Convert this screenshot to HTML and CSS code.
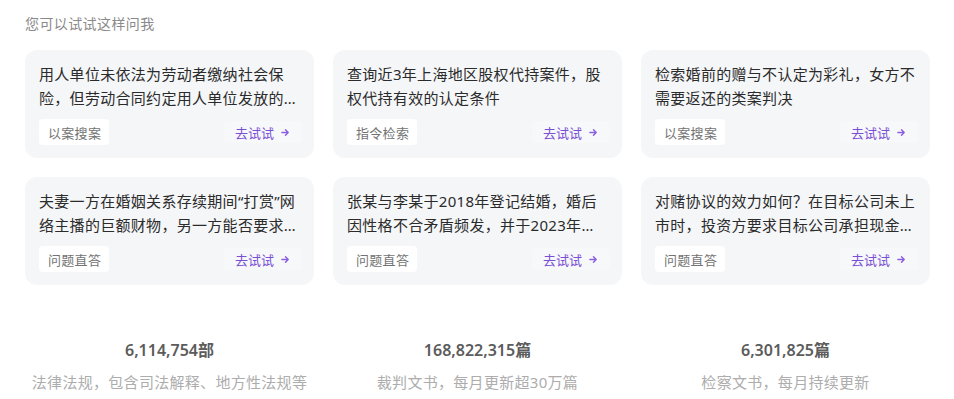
FILE: index.html
```html
<!DOCTYPE html>
<html lang="zh-CN">
<head>
    <meta charset="UTF-8">
    <meta name="viewport" content="width=device-width, initial-scale=1.0">
    <title>您可以试试这样问我</title>
    <link rel="stylesheet" href="styles.css">
</head>
<body>
    <div class="page">
        <div class="section-title">您可以试试这样问我</div>

        <div class="card-grid">
            <div class="card">
                <p class="card-text">用人单位未依法为劳动者缴纳社会保险，但劳动合同约定用人单位发放的社保补贴，劳动者能否主张经济补偿</p>
                <div class="card-footer">
                    <span class="tag">以案搜案</span>
                    <a class="try-btn" href="#">去试试 <svg class="arrow" viewBox="0 0 10 10"><path d="M1 5h7M5 2l3 3-3 3"/></svg></a>
                </div>
            </div>
            <div class="card">
                <p class="card-text">查询近3年上海地区股权代持案件，股权代持有效的认定条件</p>
                <div class="card-footer">
                    <span class="tag">指令检索</span>
                    <a class="try-btn" href="#">去试试 <svg class="arrow" viewBox="0 0 10 10"><path d="M1 5h7M5 2l3 3-3 3"/></svg></a>
                </div>
            </div>
            <div class="card">
                <p class="card-text">检索婚前的赠与不认定为彩礼，女方不需要返还的类案判决</p>
                <div class="card-footer">
                    <span class="tag">以案搜案</span>
                    <a class="try-btn" href="#">去试试 <svg class="arrow" viewBox="0 0 10 10"><path d="M1 5h7M5 2l3 3-3 3"/></svg></a>
                </div>
            </div>
            <div class="card">
                <p class="card-text">夫妻一方在婚姻关系存续期间“打赏”网络主播的巨额财物，另一方能否要求返还</p>
                <div class="card-footer">
                    <span class="tag">问题直答</span>
                    <a class="try-btn" href="#">去试试 <svg class="arrow" viewBox="0 0 10 10"><path d="M1 5h7M5 2l3 3-3 3"/></svg></a>
                </div>
            </div>
            <div class="card">
                <p class="card-text">张某与李某于2018年登记结婚，婚后因性格不合矛盾频发，并于2023年起分居，张某起诉离婚应如何处理</p>
                <div class="card-footer">
                    <span class="tag">问题直答</span>
                    <a class="try-btn" href="#">去试试 <svg class="arrow" viewBox="0 0 10 10"><path d="M1 5h7M5 2l3 3-3 3"/></svg></a>
                </div>
            </div>
            <div class="card">
                <p class="card-text">对赌协议的效力如何？在目标公司未上市时，投资方要求目标公司承担现金补偿责任能否得到支持</p>
                <div class="card-footer">
                    <span class="tag">问题直答</span>
                    <a class="try-btn" href="#">去试试 <svg class="arrow" viewBox="0 0 10 10"><path d="M1 5h7M5 2l3 3-3 3"/></svg></a>
                </div>
            </div>
        </div>

        <div class="stats">
            <div class="stat">
                <div class="stat-num">6,114,754部</div>
                <div class="stat-desc">法律法规，包含司法解释、地方性法规等</div>
            </div>
            <div class="stat">
                <div class="stat-num">168,822,315篇</div>
                <div class="stat-desc">裁判文书，每月更新超30万篇</div>
            </div>
            <div class="stat">
                <div class="stat-num">6,301,825篇</div>
                <div class="stat-desc">检察文书，每月持续更新</div>
            </div>
        </div>
    </div>
</body>
</html>
```

FILE: styles.css
```css
* {
    margin: 0;
    padding: 0;
    box-sizing: border-box;
}

body {
    font-family: "Noto Sans", "Noto Sans CJK SC", sans-serif;
    background: #ffffff;
    color: #333;
}

.page {
    padding: 14px 24px 0 25px;
}

.section-title {
    font-size: 14px;
    line-height: 20px;
    letter-spacing: 0.4px;
    color: #8a8a8a;
    margin-bottom: 16px;
}

.card-grid {
    display: grid;
    grid-template-columns: repeat(3, 289px);
    gap: 19px;
}

.card {
    background: #f5f6f8;
    border-radius: 12px;
    padding: 12px 14px 13px 14px;
    height: 108px;
}

.card-text {
    font-size: 15px;
    line-height: 24px;
    letter-spacing: 0.3px;
    color: #2b2b2b;
    height: 48px;
    overflow: hidden;
    display: -webkit-box;
    -webkit-line-clamp: 2;
    -webkit-box-orient: vertical;
}

.card-footer {
    margin-top: 9px;
    display: flex;
    align-items: center;
    justify-content: space-between;
}

.tag {
    display: inline-flex;
    align-items: center;
    height: 26px;
    padding: 0 8px 0 9px;
    background: #ffffff;
    border-radius: 4px;
    font-size: 13px;
    color: #737373;
    letter-spacing: 0.3px;
}

.try-btn {
    display: inline-flex;
    align-items: center;
    gap: 7px;
    height: 22px;
    padding: 0 12px 0 11px;
    margin-right: -2px;
    background: #f7f8fa;
    border-radius: 4px;
    font-size: 13px;
    color: #7a4fd4;
    text-decoration: none;
}

.arrow {
    width: 9px;
    height: 9px;
    fill: none;
    stroke: #8b5fe2;
    stroke-width: 1.6;
    stroke-linecap: round;
    stroke-linejoin: round;
}

.stats {
    display: grid;
    grid-template-columns: repeat(3, 289px);
    gap: 19px;
    margin-top: 54px;
    text-align: center;
}

.stat-num {
    font-size: 16px;
    line-height: 22px;
    font-weight: 600;
    color: #5c5c5c;
}

.stat-desc {
    margin-top: 10px;
    font-size: 15px;
    line-height: 22px;
    letter-spacing: 0.3px;
    color: #adadad;
}
```
